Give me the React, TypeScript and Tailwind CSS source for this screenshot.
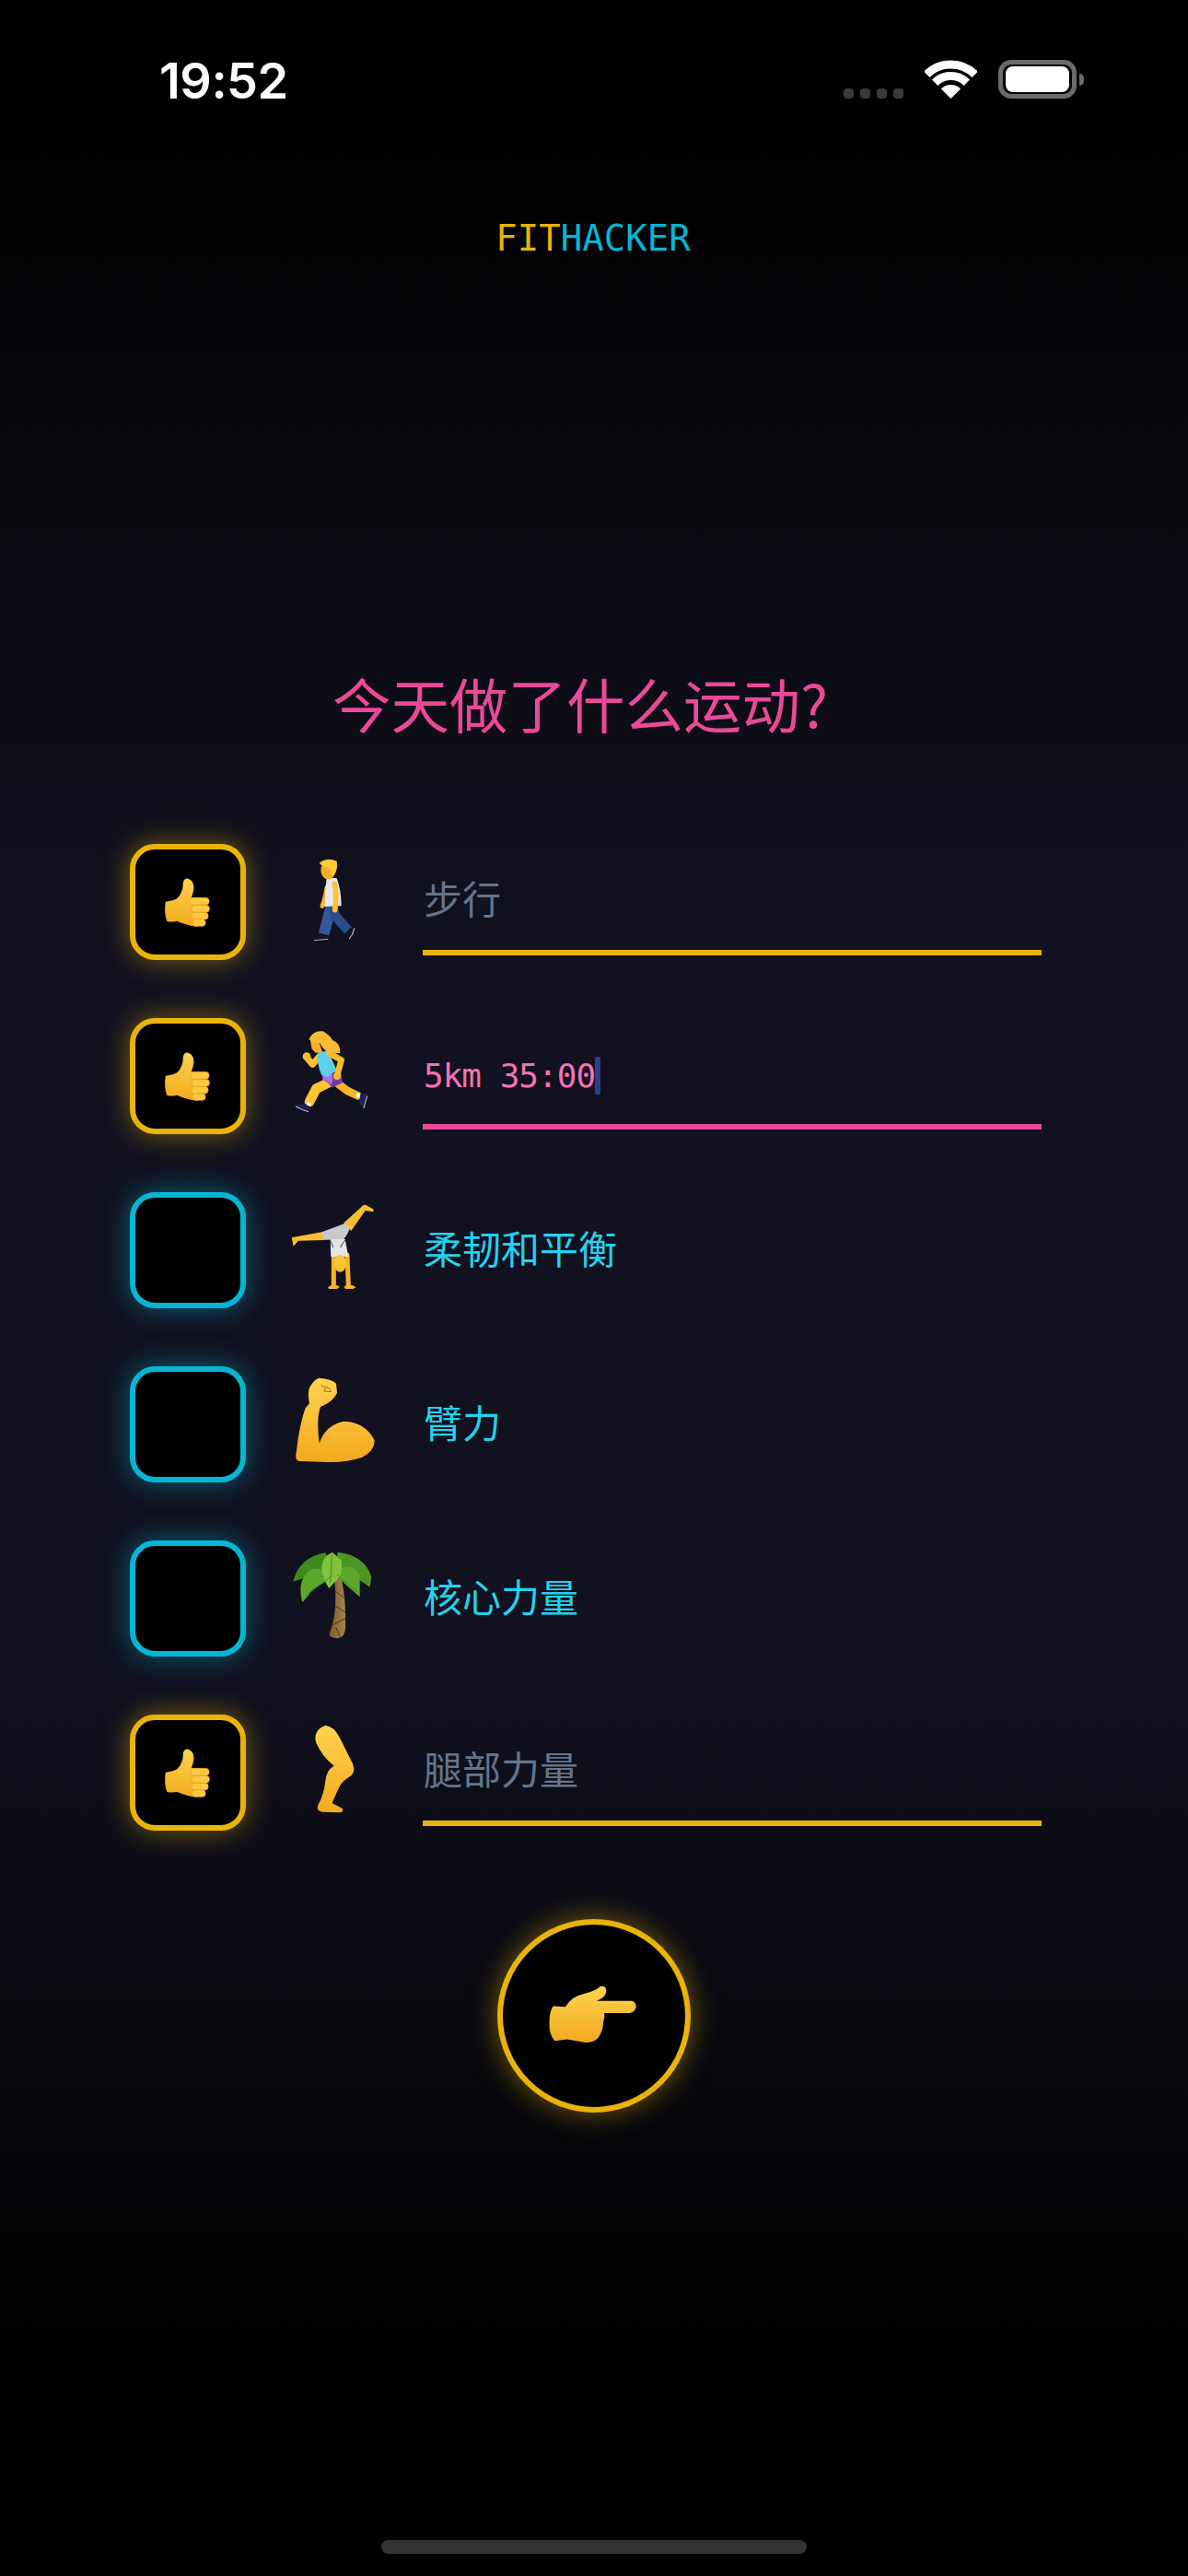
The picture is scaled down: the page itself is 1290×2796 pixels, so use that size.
import React from "react";

const cjk = "font-['Noto_Sans_CJK_SC',sans-serif]";
const mono = "font-['DejaVu_Sans_Mono',monospace]";

function Skin() {
  return (
    <defs>
      <linearGradient id="skin" x1="0" y1="0" x2="0" y2="1">
        <stop offset="0" stopColor="#ffd34e" />
        <stop offset="1" stopColor="#f2a91e" />
      </linearGradient>
      <linearGradient id="trunk" x1="0" y1="0" x2="1" y2="0">
        <stop offset="0" stopColor="#7d5a2c" />
        <stop offset="1" stopColor="#a5854f" />
      </linearGradient>
    </defs>
  );
}

function Thumb() {
  return (
    <svg viewBox="170 155 155 165" className="mr-[2px] h-[55px] w-[52px]">
      <Skin />
      <path d="M178 235Q205 232 215 225Q235 205 235 175Q237 158 252 160Q270 166 270 190Q268 208 262 222L290 222L280 316Q245 312 215 298Q195 303 182 298Q172 270 178 235Z" fill="url(#skin)" />
      <g fill="#fdc93f" stroke="#e39c1d" strokeWidth="2">
        <rect x="258" y="222" width="62" height="24" rx="12" />
        <rect x="262" y="246" width="59" height="24" rx="12" />
        <rect x="262" y="270" width="55" height="23" rx="11" />
        <rect x="265" y="292" width="43" height="23" rx="11" />
      </g>
    </svg>
  );
}

function Pointer() {
  return (
    <svg viewBox="285 280 285 190" className="mr-[3px] mb-[5px] h-[64px] w-[97px]">
      <Skin />
      <path d="M300 350L340 352Q360 318 400 310Q440 300 452 286Q474 282 471 306Q465 325 440 333L555 333Q570 340 567 355Q560 372 545 372L465 372Q468 385 462 400Q462 425 447 450Q430 470 400 466Q370 462 345 457L305 462Q286 440 288 400Q288 370 300 350Z" fill="url(#skin)" />
    </svg>
  );
}

function Walker() {
  return (
    <svg viewBox="45 -12 288 378" className="h-[126px] w-[96px]" fill="none" strokeLinecap="round" strokeLinejoin="round">
      <Skin />
      <path d="M165 130Q160 165 150 190" stroke="#f5b52c" strokeWidth="15" />
      <path d="M180 186L155 282" stroke="#35579c" strokeWidth="36" strokeLinecap="butt" />
      <path d="M184 192L192 222L234 270" stroke="#2a4a8a" strokeWidth="32" strokeLinecap="butt" />
      <path d="M164 97L197 100Q212 140 212 190L157 192Q160 140 164 97Z" fill="#e9e9ec" />
      <path d="M190 118Q198 145 191 203" stroke="#ffc233" strokeWidth="17" />
      <ellipse cx="169" cy="74" rx="24" ry="29" fill="#f5ad26" />
      <path d="M140 50Q165 30 197 44Q202 70 188 90L176 88Q178 70 165 64Q150 62 140 50Z" fill="#ffc93a" />
      <path d="M122 298Q130 285 150 285L170 287L170 300L128 304Z" fill="#15151c" />
      <path d="M124 302L168 298" stroke="#cfcfd6" strokeWidth="2.5" />
      <path d="M226 288L240 262L254 262Q250 285 238 298Z" fill="#15151c" />
      <path d="M254 263Q250 285 238 297" stroke="#d8d8de" strokeWidth="3" />
    </svg>
  );
}

function Runner() {
  return (
    <svg viewBox="45 -15 288 378" className="h-[126px] w-[96px]" fill="none" strokeLinecap="round" strokeLinejoin="round">
      <Skin />
      <path d="M200 198L232 222L266 238" stroke="#f7b42b" strokeWidth="26" />
      <path d="M172 195L130 215L108 258" stroke="#ffc233" strokeWidth="32" />
      <path d="M98 112L118 136L146 104" stroke="#ffbe30" strokeWidth="21" />
      <circle cx="99" cy="110" r="13" fill="#ffbe30" />
      <path d="M153 170L185 166L212 164L216 196L180 212Q175 196 151 186Z" fill="#7a35a8" />
      <path d="M151 172L182 168L184 190L178 204Q172 190 151 186Z" fill="#b06fe0" />
      <path d="M135 100L168 90L197 155L168 177L148 172Q130 130 135 100Z" fill="#5fd0ea" />
      <path d="M174 100L212 122L198 172" stroke="#f9ba2c" strokeWidth="20" />
      <circle cx="198" cy="174" r="12" fill="#f9ba2c" />
      <path d="M110 52L137 55L150 96L128 98L116 86Z" fill="#f6b029" />
      <path d="M106 54Q120 24 152 28Q174 40 184 58Q210 66 208 100Q185 100 165 94Q150 84 142 66Q125 70 106 54Z" fill="#f9bb33" />
      <path d="M62 268L100 263L110 275L105 292Q80 285 62 272Z" fill="#1e2350" />
      <path d="M64 273Q85 285 104 290" stroke="#c9cbdc" strokeWidth="3" />
      <path d="M270 232L295 232L297 245L285 280L272 265Z" fill="#1e2350" />
      <path d="M296 240L285 278" stroke="#c9cbdc" strokeWidth="3" />
      <path d="M100 256L114 263L110 272L98 268Z M262 228L274 231L272 246L260 242Z" fill="#f2f2f2" />
    </svg>
  );
}

function Cartwheel() {
  return (
    <svg viewBox="585 42 288 378" className="h-[126px] w-[96px]" fill="none" strokeLinecap="round" strokeLinejoin="round">
      <Skin />
      <path d="M696 170L696 198L612 200L596 218L590 190Z" fill="#f9bd2f" />
      <path d="M760 142L815 92Q825 78 836 86L858 98L855 106L830 102L784 168Z" fill="#f9bd2f" />
      <path d="M727 248L727 346M771 246L775 346" stroke="#f5b329" strokeWidth="15" />
      <path d="M708 352Q725 336 747 350L738 357L712 357Z M760 350Q780 336 800 352L790 357L765 357Z" fill="#f5b329" />
      <path d="M688 172L765 143L780 160Q767 190 757 197L715 197L694 197Z" fill="#c9c9cb" />
      <path d="M716 195L764 195L775 252L718 252Z" fill="#e4e4e6" />
      <path d="M714 196Q726 220 724 222M766 196Q748 218 750 222" stroke="#3a3a42" strokeWidth="3" strokeLinecap="butt" />
      <ellipse cx="748" cy="274" rx="20" ry="28" fill="#ffc233" />
    </svg>
  );
}

function Arm() {
  return (
    <svg viewBox="585 609 288 378" className="h-[126px] w-[96px]">
      <Skin />
      <path d="M680 647Q720 650 735 665L738 695Q725 725 685 740Q670 770 680 860Q700 800 760 788Q830 790 860 850Q860 885 820 905Q760 925 690 920L615 918Q600 915 605 890Q615 800 635 745L648 730Q640 690 650 675Q665 650 680 647Z" fill="url(#skin)" />
      <path d="M685 672L712 680L718 692L695 690L700 680" stroke="#b8670f" strokeWidth="3" fill="none" />
    </svg>
  );
}

function Palm() {
  return (
    <svg viewBox="585 66 288 378" className="h-[126px] w-[96px]">
      <Skin />
      <path d="M728 190L752 190Q768 260 765 350Q765 380 740 385Q712 382 712 372Q730 330 732 280Q735 230 728 190Z" fill="url(#trunk)" />
      <path d="M733 232L760 252M731 278L765 300M722 342L765 320M735 350L748 382" stroke="#4e3315" strokeWidth="3" fill="none" />
      <path d="M700 106Q615 120 595 200Q650 180 725 170Z" fill="#3f8a1d" />
      <path d="M740 104Q830 115 850 185L845 218Q800 180 730 170Z" fill="#4a9524" />
      <path d="M730 180Q670 140 640 170Q608 205 625 268Q635 255 645 245Q650 235 660 225Q695 205 730 180Z" fill="#5ca62a" />
      <path d="M730 175Q780 125 812 178L812 250Q770 215 730 175Z" fill="#5ca62a" />
      <path d="M722 104Q688 120 688 155Q690 190 712 222Q730 200 747 185Q757 160 752 130Q735 115 722 104Z" fill="#7fc43b" />
      <path d="M722 112L716 205M722 180L637 245M738 178L805 235" stroke="#3e7f19" strokeWidth="2.5" fill="none" />
    </svg>
  );
}

function Leg() {
  return (
    <svg viewBox="585 633 288 378" className="h-[126px] w-[96px]">
      <Skin />
      <path d="M700 668Q728 672 745 705L790 795Q800 825 775 838Q755 850 745 870Q730 900 722 922L755 938Q762 950 745 952L690 950Q668 948 676 928Q695 895 700 850Q702 815 728 800Q690 770 670 725Q658 685 700 668Z" fill="url(#skin)" />
    </svg>
  );
}

function StatusBar() {
  return (
    <div className="flex h-[107px] items-end pl-[173px] pr-[113px]">
      <span className="font-['Inter',sans-serif] text-[54px] leading-[39px] font-semibold tracking-[-0.5px] text-white">19:52</span>
      <div className="ml-auto flex items-end">
        <div className="flex gap-[7px]">
          <div className="h-[11px] w-[11px] rounded-[4px] bg-[#3a3a3a]" />
          <div className="h-[11px] w-[11px] rounded-[4px] bg-[#3a3a3a]" />
          <div className="h-[11px] w-[11px] rounded-[4px] bg-[#3a3a3a]" />
          <div className="h-[11px] w-[11px] rounded-[4px] bg-[#3a3a3a]" />
        </div>
        <svg viewBox="0 0 57 42" className="ml-[23px] h-[42px] w-[57px]" fill="none" stroke="#fff">
          <path d="M2.3 15.8A37 37 0 0 1 54.7 15.8" strokeWidth="9" />
          <path d="M11.2 24.7A24.5 24.5 0 0 1 45.8 24.7" strokeWidth="9" />
          <path d="M28.5 42L17.9 31.4A15 15 0 0 1 39.1 31.4Z" fill="#fff" stroke="none" />
        </svg>
        <div className="ml-[23px] flex items-center">
          <div className="flex h-[42px] w-[85px] items-center justify-center rounded-[14px] border-[5px] border-[#6b6b6b]">
            <div className="h-[28px] w-[69px] rounded-[8px] bg-white" />
          </div>
          <div className="ml-[3px] h-[13px] w-[5px] rounded-r-full bg-[#6b6b6b]" />
        </div>
      </div>
    </div>
  );
}

const rows = [
  { on: true, icon: <Walker />, value: "步行", kind: "placeholder" },
  { on: true, icon: <Runner />, value: "5km 35:00", kind: "active" },
  { on: false, icon: <Cartwheel />, value: "柔韧和平衡", kind: "label" },
  { on: false, icon: <Arm />, value: "臂力", kind: "label" },
  { on: false, icon: <Palm />, value: "核心力量", kind: "label" },
  { on: true, icon: <Leg />, value: "腿部力量", kind: "placeholder" },
];

function Row({ on, icon, value, kind }: { on: boolean; icon: React.ReactNode; value: string; kind: string }) {
  return (
    <div className="flex h-[126px] items-start">
      {on ? (
        <div className="flex h-[126px] w-[126px] items-center justify-center rounded-[27px] border-[6px] border-[#eab308] bg-black shadow-[0_0_30px_rgba(234,179,8,0.5)]">
          <Thumb />
        </div>
      ) : (
        <div className="h-[126px] w-[126px] rounded-[27px] border-[6px] border-[#06b6d4] bg-black shadow-[0_0_30px_rgba(6,182,212,0.5)]" />
      )}
      <div className="ml-[48px] h-[126px] w-[96px]">{icon}</div>
      {kind === "label" && (
        <div className={`ml-[48px] flex h-[126px] items-center pb-[8px] pl-[1px] text-[42px] text-[#22d3ee] ${cjk}`}>{value}</div>
      )}
      {kind === "placeholder" && (
        <div className={`ml-[48px] flex h-[121px] w-[672px] items-center border-b-[6px] border-[#eab308] pl-[1px] text-[42px] text-[#64748b] ${cjk}`}>{value}</div>
      )}
      {kind === "active" && (
        <div className={`ml-[48px] flex h-[121px] w-[672px] items-center border-b-[6px] border-[#ec4899] pt-[10px] pl-[1px] text-[36px] tracking-[-1px] text-[#f472b6] ${mono}`}>
          {value}
          <span className="h-[41px] w-[6px] rounded-[2px] bg-[#2b3f8f]" />
        </div>
      )}
    </div>
  );
}

export default function App() {
  return (
    <div className="flex h-[2796px] w-[1290px] flex-col overflow-hidden bg-[linear-gradient(180deg,#000_4%,#11111f_35%,#11111f_65%,#000_92%)]">
      <StatusBar />
      <div className={`mt-[130px] flex justify-center pr-[2px] text-[39px] leading-[44px] ${mono}`}>
        <span className="text-[#eab308]">FIT</span>
        <span className="text-[#06b6d4]">HACKER</span>
      </div>
      <h1 className={`mt-[435px] pl-[361px] text-[63.5px] leading-[92px] font-normal text-[#ec4899] ${cjk}`}>今天做了什么运动?</h1>
      <div className="mt-[108px] flex flex-col gap-[63px] pl-[141px]">
        {rows.map((row, i) => (
          <Row key={i} {...row} />
        ))}
      </div>
      <div className="mt-[96px] flex justify-center">
        <div className="flex h-[210px] w-[210px] items-center justify-center rounded-full border-[6px] border-[#eab308] bg-black shadow-[0_0_30px_rgba(234,179,8,0.5)]">
          <Pointer />
        </div>
      </div>
      <div className="mt-[464px] flex justify-center">
        <div className="h-[15px] w-[462px] rounded-full bg-[#333]" />
      </div>
    </div>
  );
}
